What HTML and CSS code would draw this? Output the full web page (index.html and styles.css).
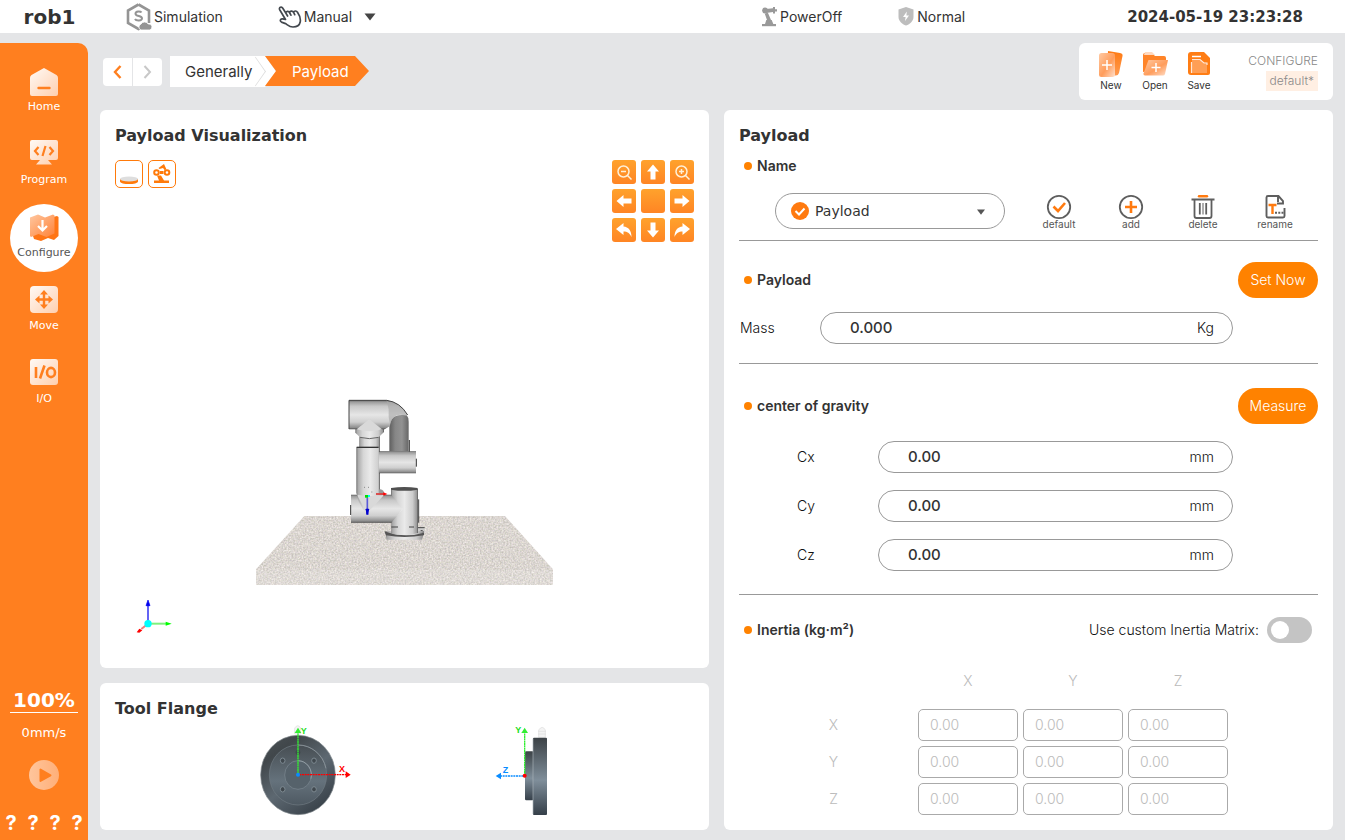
FILE: index.html
```html
<!DOCTYPE html>
<html lang="en">
<head>
<meta charset="utf-8">
<title>rob1 - Payload</title>
<link rel="stylesheet" href="styles.css">
</head>
<body>
<svg class="defs" width="0" height="0" aria-hidden="true">
  <defs>
    <linearGradient id="pale" x1="0" y1="0" x2="1" y2="1"><stop offset="0" stop-color="#fffaf6"/><stop offset="1" stop-color="#ffcfae"/></linearGradient>
    <linearGradient id="sheet" x1="0" y1="0" x2="1" y2="1"><stop offset="0" stop-color="#ffc9a2"/><stop offset="0.55" stop-color="#ff9d5c"/><stop offset="1" stop-color="#ffe0cc"/></linearGradient>
    <linearGradient id="deep" x1="0" y1="0" x2="0" y2="1"><stop offset="0" stop-color="#ff7a12"/><stop offset="1" stop-color="#ff9a50"/></linearGradient>
    <linearGradient id="mapFace" x1="0" y1="0" x2="1" y2="1"><stop offset="0" stop-color="#ffc7a0"/><stop offset="1" stop-color="#ff8238"/></linearGradient>
    <linearGradient id="playFace" x1="0" y1="0" x2="1" y2="0"><stop offset="0" stop-color="#ffc59c"/><stop offset="1" stop-color="#ffaf78"/></linearGradient>
    <linearGradient id="tubeH" x1="0" y1="0" x2="0" y2="1"><stop offset="0" stop-color="#555"/><stop offset="0.05" stop-color="#9a9a9a"/><stop offset="0.2" stop-color="#c8c8c8"/><stop offset="0.5" stop-color="#e6e6e6"/><stop offset="0.75" stop-color="#cfcfcf"/><stop offset="0.95" stop-color="#8a8a8a"/><stop offset="1" stop-color="#444"/></linearGradient>
    <linearGradient id="tubeV" x1="0" y1="0" x2="1" y2="0"><stop offset="0" stop-color="#6a6a6a"/><stop offset="0.06" stop-color="#aaa"/><stop offset="0.25" stop-color="#d6d6d6"/><stop offset="0.5" stop-color="#eaeaea"/><stop offset="0.8" stop-color="#cdcdcd"/><stop offset="0.95" stop-color="#999"/><stop offset="1" stop-color="#555"/></linearGradient>
    <linearGradient id="tubeDark" x1="0" y1="0" x2="1" y2="0"><stop offset="0" stop-color="#5f5f5f"/><stop offset="0.3" stop-color="#868686"/><stop offset="0.65" stop-color="#929292"/><stop offset="1" stop-color="#666"/></linearGradient>
    <linearGradient id="steel" x1="0" y1="0" x2="0" y2="1"><stop offset="0" stop-color="#3c4246"/><stop offset="0.55" stop-color="#7f8e9a"/><stop offset="1" stop-color="#353f49"/></linearGradient>
    <linearGradient id="disc" x1="0" y1="0" x2="0.7" y2="1"><stop offset="0" stop-color="#4c5357"/><stop offset="0.25" stop-color="#41474b"/><stop offset="0.6" stop-color="#5d6871"/><stop offset="1" stop-color="#39424a"/></linearGradient>
    <linearGradient id="discFace" x1="0" y1="0" x2="0" y2="1"><stop offset="0" stop-color="#474e53"/><stop offset="0.6" stop-color="#65727c"/><stop offset="1" stop-color="#4e5962"/></linearGradient>
    <filter id="grain" x="0" y="0" width="1" height="1" color-interpolation-filters="sRGB">
      <feTurbulence type="fractalNoise" baseFrequency="0.2" numOctaves="2" seed="4" result="n"/>
      <feColorMatrix in="n" type="matrix" values="0.28 0 0 0 0.72  0.26 0.06 0 0 0.68  0.26 0 0.08 0 0.65  0 0 0 0 1"/>
      <feComposite in2="SourceGraphic" operator="in"/>
    </filter>
  </defs>
</svg>

<div class="app">
  <header class="topbar">
    <strong class="robot-name">rob1</strong>
    <div class="status simulation">
      <svg width="26" height="28" viewBox="0 0 26 28"><path d="M12.500 1.500l10.500 6v12.500M16 24.500l-3.500 1.500-10.500-6v-12.500l10.500-6" fill="none" stroke="#949494" stroke-width="2.600"/><path d="M15.500 9.500c-1-1.500-6-1.600-6 1.200 0 3 6.500 1.600 6.500 4.600 0 3-6 2.800-7 .7" fill="none" stroke="#949494" stroke-width="2"/><path d="M15 27a3.200 3.200 0 0 1 0-6 4.200 4.200 0 0 1 7.200 0 3 3 0 0 1 1.300 6z" fill="#949494" stroke="#fff" stroke-width=".8"/></svg>
      <span>Simulation</span>
    </div>
    <button class="status manual" type="button">
      <svg width="24" height="22" viewBox="0 0 24 22"><path d="M7.500 13.500L1.700 3.700C.5 1.400 3.600.2 4.800 2.200l3 4.800c.2-2 3-2.300 3.700-.5.500-1.600 3-2 4-.3.700-1.700 3.200-1.500 4 .1 2.300 3.300 3.300 6.700 2.700 9.700-.7 3.500-3.600 5-7.200 5-3.600 0-5.500-2.200-7.500-3.400l-4-1.500c-2-1-1.200-3.600 1-3.200zM7.800 7l1.800 3M11.500 6.500l1.400 2.700M15.500 6.200l1.200 2.500" fill="none" stroke="#43484e" stroke-width="1.700" stroke-linejoin="round" stroke-linecap="round"/></svg>
      <span>Manual</span>
      <svg class="caret" width="12" height="8" viewBox="0 0 12 8"><path d="M.5.500h11L6 7.500z" fill="#444"/></svg>
    </button>
    <div class="status power">
      <svg width="16" height="20" viewBox="0 0 16 20"><g fill="#999"><rect x="1" y="17" width="14" height="2.200"/><path d="M4 17l1.300-4h5.400l1.600 4zM6 13L3.800 6.800l3-1.200L10 13z"/><circle cx="4" cy="3.500" r="2.900"/><path d="M5 2l7-.8V0h2v2.200h2v2.300h-2v2h-2V5L5 6z"/></g></svg>
      <span>PowerOff</span>
    </div>
    <div class="status normal">
      <svg width="16" height="19" viewBox="0 0 16 19"><path d="M8 0l7.500 2.600v7.400c0 4-3.500 7-7.500 8.600C4 17 .5 14 .5 10V2.600z" fill="#bdbdbd"/><path d="M8.800 4.500L5 10h2.600L7 14l4-5.500H8.400z" fill="#fff"/></svg>
      <span>Normal</span>
    </div>
    <time class="clock" datetime="2024-05-19T23:23:28">2024-05-19 23:23:28</time>
  </header>

  <div class="body">
    <nav class="sidebar" aria-label="Main">
      <ul class="menu">
        <li><a class="menu-item" href="#home"><svg width="30" height="30" viewBox="0 0 30 30"><path d="M15 2l12.500 7q1.500 1 1.500 3v16q0 2-2 2H3q-2 0-2-2V12q0-2 1.500-3z" fill="url(#pale)"/><path d="M9.500 22h11" stroke="#ff7f1f" stroke-width="2.400" stroke-linecap="round"/></svg><span>Home</span></a></li>
        <li><a class="menu-item" href="#program"><svg width="30" height="30" viewBox="0 0 30 30"><path d="M3 1h24q2 0 2 2v16q0 2-2 2h-8l4 4.500H7L11 21H3q-2 0-2-2V3q0-2 2-2z" fill="url(#pale)"/><path d="M9.500 8L6 12l3.500 4M20.500 8l3.500 4-3.500 4M16.500 7l-3 10" fill="none" stroke="#ff7f1f" stroke-width="2.200"/></svg><span>Program</span></a></li>
        <li><a class="menu-item active" href="#configure" aria-current="page"><svg width="30" height="30" viewBox="0 0 30 30"><path d="M10 6l8 1 6-2 4-1 1.500 1v19l-4.500 4-6-2-7 3-7-2-1-3z" fill="#ff7515"/><path d="M1 5.500l8-3 7 3 8-3 1.500 1v18l-8 3.500-8-3-7.500 3-1-1z" fill="url(#mapFace)"/><path d="M13.500 8v10M9 14l4.500 4.500L18 14" fill="none" stroke="#fff" stroke-width="2.200"/></svg><span>Configure</span></a></li>
        <li><a class="menu-item" href="#move"><svg width="30" height="30" viewBox="0 0 30 30"><rect x="1" y="1" width="28" height="27" rx="4" fill="url(#pale)"/><path d="M15 7v15M8 14.500h14" stroke="#ff7f1f" stroke-width="2.400"/><path d="M15 5l4 4.500h-8zM15 24l4-4.500h-8zM6 14.500l4.500-4v8zM24 14.500l-4.500-4v8z" fill="#ff7f1f"/></svg><span>Move</span></a></li>
        <li><a class="menu-item" href="#io"><svg width="30" height="30" viewBox="0 0 30 30"><rect x="1" y="1" width="28" height="26" rx="3" fill="url(#pale)"/><path d="M7 9v11M15.500 7.500l-4.500 13" stroke="#ff7f1f" stroke-width="2.600"/><ellipse cx="22" cy="14.500" rx="4" ry="4.600" fill="none" stroke="#ff7f1f" stroke-width="2.600"/></svg><span>I/O</span></a></li>
      </ul>
      <div class="speed">
        <strong class="percent">100%</strong>
        <span class="velocity">0mm/s</span>
        <button class="play" type="button" aria-label="Play"><svg width="30" height="30" viewBox="0 0 30 30"><circle cx="15" cy="15" r="15" fill="url(#playFace)"/><path d="M11.500 9.500v11.500l10-5.700z" fill="#ff7f1f" stroke="#ff7f1f" stroke-width="2" stroke-linejoin="round"/></svg></button>
        <div class="unknown"><span>?</span><span>?</span><span>?</span><span>?</span></div>
      </div>
    </nav>

    <main class="main">
      <div class="pagebar">
        <div class="history">
          <button type="button" aria-label="Back"><svg width="10" height="16" viewBox="0 0 10 16"><path d="M7.500 2L2 8l5.500 6" fill="none" stroke="#ff7f1f" stroke-width="2.400"/></svg></button>
          <button type="button" aria-label="Forward"><svg width="10" height="16" viewBox="0 0 10 16"><path d="M1.500 2L7 8l-5.500 6" fill="none" stroke="#c8c8c8" stroke-width="2"/></svg></button>
        </div>
        <nav class="crumbs" aria-label="Breadcrumb">
          <a class="crumb" href="#generally">Generally</a>
          <a class="crumb current" href="#payload" aria-current="page">Payload</a>
        </nav>
        <section class="files" aria-label="Configuration file">
          <button type="button"><svg width="26" height="28" viewBox="0 0 26 28"><path d="M10 1l12 2q3 .5 2.500 3L21 23q-1 3-4 2.500L9 24z" fill="url(#deep)"/><rect x="1" y="3" width="16" height="24" rx="2.500" fill="url(#sheet)"/><path d="M9 10v10M4 15h10" stroke="#fff" stroke-width="1.500"/></svg><span>New</span></button>
          <button type="button"><svg width="26" height="28" viewBox="0 0 26 28"><path d="M1 22V5q0-2 2-2h7l3 3h9q2 0 2 2v10z" fill="#ff8428"/><path d="M3 2h7l3 3H2z" fill="#ffd9bf"/><path d="M6.500 10H26l-3 14q-.5 1.500-2 1.500H3q-2 0-1.500-2z" fill="url(#sheet)"/><path d="M14 13v9M9.500 17.500h9" stroke="#fff" stroke-width="1.500"/></svg><span>Open</span></button>
          <button type="button"><svg width="26" height="28" viewBox="0 0 26 28"><path d="M5 2h13l6 6v15q0 2-2 2H5q-3 0-3-3V5q0-3 3-3z" fill="#ff7d14"/><path d="M6 23V10q0-1 1-1h7l4 3.500h2q1 0 1 1V23z" fill="#ff9f55"/><path d="M5.500 23V12M6 9.500h8l4 3.500h3v2" fill="none" stroke="#ffe6d4" stroke-width="1.200"/><path d="M6 6.500h9" stroke="#fff" stroke-width="1.500"/></svg><span>Save</span></button>
          <div class="file-info"><span>CONFIGURE</span><span class="file-name">default*</span></div>
        </section>
      </div>

      <div class="columns">
        <div class="left">
          <section class="card visual">
            <h2>Payload Visualization</h2>
            <div class="visual-tools">
              <div class="views">
                <button type="button" aria-label="Show base"><svg width="24" height="24" viewBox="0 0 24 24"><path d="M3 17v2.500c0 3.400 18 3.400 18 0V17z" fill="#ff7a0a"/><ellipse cx="12" cy="17" rx="9" ry="2.600" fill="#dedede"/></svg></button>
                <button type="button" aria-label="Show robot"><svg width="24" height="24" viewBox="0 0 24 24"><g fill="none" stroke="#ff7a0a" stroke-width="2"><circle cx="6.500" cy="10.500" r="2.300"/><circle cx="17" cy="10.500" r="2.300"/></g><path d="M4 18.500h5l-2-5h4l3 5h5V21H4zM10 9h3.500v3H10zM8.500 6L14 2l2.500 5.500-2 .5-1.500-2-3.500 1z" fill="#ff7a0a"/></svg></button>
              </div>
              <div class="pad">
                <button type="button" aria-label="Zoom out"><svg width="18" height="18" viewBox="0 0 18 18"><g fill="none" stroke="#fff0d8" stroke-width="1.500"><circle cx="8.500" cy="8.500" r="5.500"/><path d="M12.500 12.500l4 4M6 8.500h5"/></g></svg></button>
                <button type="button" aria-label="Up"><svg width="18" height="18" viewBox="0 0 18 18"><path d="M9 1.500l6 7h-3.500v8h-5v-8H3z" fill="#fff"/></svg></button>
                <button type="button" aria-label="Zoom in"><svg width="18" height="18" viewBox="0 0 18 18"><g fill="none" stroke="#fff0d8" stroke-width="1.500"><circle cx="8.500" cy="8.500" r="5.500"/><path d="M12.500 12.500l4 4M6 8.500h5M8.500 6v5"/></g></svg></button>
                <button type="button" aria-label="Left"><svg width="18" height="18" viewBox="0 0 18 18"><path d="M1.500 9l7-6v3.500h8v5h-8V15z" fill="#fff"/></svg></button>
                <button type="button" aria-label="Center"></button>
                <button type="button" aria-label="Right"><svg width="18" height="18" viewBox="0 0 18 18"><path d="M16.500 9l-7-6v3.500h-8v5h8V15z" fill="#fff"/></svg></button>
                <button type="button" aria-label="Rotate left"><svg width="18" height="18" viewBox="0 0 18 18"><path d="M1 8l7.500-6v3.500c5 .5 8 4 8 10.500-2-4-4-5.500-8-5.500V14z" fill="#fff"/></svg></button>
                <button type="button" aria-label="Down"><svg width="18" height="18" viewBox="0 0 18 18"><path d="M9 16.500l6-7h-3.500v-8h-5v8H3z" fill="#fff"/></svg></button>
                <button type="button" aria-label="Rotate right"><svg width="18" height="18" viewBox="0 0 18 18"><path d="M17 8L9.500 2v3.500c-5 .5-8 4-8 10.500 2-4 4-5.500 8-5.500V14z" fill="#fff"/></svg></button>
              </div>
            </div>
            <div class="stage">
              <svg class="scene" width="297" height="187" viewBox="48 27 891 561" role="img" aria-label="Robot arm on a table">
                <path d="M193 378H795L939 538V585H48V538z" fill="#ddd6d1" filter="url(#grain)"/>
                <path d="M48 539H939V585H48z" fill="#fff" opacity=".12"/>
                <path d="M534 412h20v18h-20z" fill="#ccc"/><path d="M534 413h20M542 422h6" stroke="#444" stroke-width="3"/>
                <path d="M448 184V96q0-30 30-30 28 0 28 30v88z" fill="url(#tubeDark)"/><path d="M508 150v36" stroke="#333" stroke-width="3"/>
                <path d="M358 130h62v170h-62z" fill="url(#tubeV)"/>
                <path d="M346 112h86v14l-16 16q-30 8-56 0l-14-14z" fill="url(#tubeV)"/><path d="M360 142q28 8 56 0" fill="none" stroke="#666" stroke-width="3"/>
                <path d="M327 31H440Q480 36 501 72V76Q452 68 450 108L434 118H420L388 90 352 118H327z" fill="url(#tubeH)"/>
                <path d="M440 33Q480 36 501 72V78Q458 64 450 104 444 80 446 58z" fill="#aaa" opacity=".65"/>
                <path d="M327 31H440Q480 36 503 75M327 31v86" fill="none" stroke="#444" stroke-width="3"/>
                <path d="M388 88l-38 30q38 12 76 0z" fill="#d9d9d9"/>
                <path d="M416 184H528V250H416z" fill="url(#tubeH)"/><path d="M529 206v24" stroke="#333" stroke-width="3"/>
                <path d="M412 300q20-8 22 16h-22z" fill="#999"/>
                <path d="M333 314H460L492 350 458 398H333z" fill="url(#tubeH)"/><path d="M332 345v30" stroke="#333" stroke-width="3"/>
                <path d="M436 424h116l-6 25H440z" fill="url(#tubeV)"/><path d="M433 424q60 22 119 4v8q-60 10-114 0z" fill="#555"/>
                <path d="M453 297h81v132q-40 10-80 2v-33l34-42-35-42z" fill="url(#tubeV)"/><path d="M453 294q40-6 80 0v5q-40 7-80 0z" fill="#505050"/><path d="M536 328v70M454 411h20M507 411h15" stroke="#444" stroke-width="3"/>
                <path d="M349 172h67v136l17 6-45 49q-10 4-18-4l-14-25-7-26z" fill="url(#tubeV)"/><path d="M353 318l23 42h14l43-46q-40 8-80 0z" fill="#d9d9d9"/><path d="M350 172h66" stroke="#333" stroke-width="4"/>
                <path d="M382 322v40" stroke="#5b5bd8" stroke-width="5"/><path d="M382 356v18" stroke="#00c" stroke-width="7"/><path d="M376 357h12l-6 18z" fill="#0000d0"/>
                <path d="M408 312h24" stroke="#d33" stroke-width="5"/><path d="M430 307l12 5-12 5z" fill="#f00"/><path d="M375 315h9v8h-9z" fill="#00e000"/><path d="M384 315h6v6h-6z" fill="#0ff"/><path d="M372 292h3M384 292h3M394 306h3" stroke="#888" stroke-width="3"/>
              </svg>
              <svg class="gizmo" width="36" height="36" viewBox="0 0 108 108" role="img" aria-label="Axes"><path d="M36 72V16" stroke="#6464f4" stroke-width="6"/><path d="M30 20l6-17 6 17z" fill="#00e" stroke="#00e" stroke-width="2"/><path d="M36 74h54" stroke="#7cf27c" stroke-width="6"/><path d="M89 68l18 6-18 6z" fill="#0f0"/><path d="M36 74L16 90" stroke="#f37b7b" stroke-width="6"/><path d="M2 100l8-11 9 5-9 7z" fill="#f00"/><circle cx="36" cy="74" r="11" fill="#0ff"/></svg>
            </div>
          </section>
          <section class="card flange">
            <h2>Tool Flange</h2>
            <div class="flange-views">
              <svg width="93" height="92" viewBox="60 12 279 276" role="img" aria-label="Flange front view">
                <path d="M164 42V24q10-14 18 0v18z" fill="#f4f4f4" stroke="#ddd" stroke-width="2"/>
                <ellipse cx="174" cy="165" rx="112" ry="119" fill="url(#disc)" stroke="#848b90" stroke-width="2"/>
                <ellipse cx="174" cy="165" rx="86" ry="90" fill="url(#discFace)" stroke="#6f7a82" stroke-width="2"/>
                <path d="M174 75a86 90 0 0 1 84 70" fill="none" stroke="#98a2a8" stroke-width="2"/>
                <ellipse cx="174" cy="165" rx="40" ry="43" fill="#56626b" stroke="#7d8a93" stroke-width="2"/><path d="M174 122a40 43 0 0 1 39 54" fill="none" stroke="#a3adb3" stroke-width="2"/>
                <g fill="#40484e" stroke="#7d8991" stroke-width="3"><ellipse cx="128" cy="122" rx="7" ry="8"/><ellipse cx="222" cy="122" rx="7" ry="8"/><ellipse cx="128" cy="208" rx="7" ry="8"/><ellipse cx="222" cy="208" rx="7" ry="8"/></g><ellipse cx="174" cy="97" rx="7" ry="8" fill="#40484e"/>
                <path d="M174 160V38" stroke="#3e3" stroke-width="4" stroke-dasharray="6 1"/><path d="M164 39l10-16 10 16z" fill="#3e3"/>
                <path d="M178 164h140" stroke="#f00" stroke-width="4" stroke-dasharray="6 2"/><path d="M317 154l15 10-15 10z" fill="#f00"/><circle cx="174" cy="164" r="6" fill="#0a8cff"/>
                <text x="182" y="41" class="axis-text" fill="#2d2">Y</text><text x="297" y="157" class="axis-text" fill="#f00">X</text>
              </svg>
              <svg width="54" height="92" viewBox="765 12 162 276" role="img" aria-label="Flange side view">
                <path d="M896 52V30q11-16 20 0v22zM894 34h24M894 42h24" fill="#f4f4f4" stroke="#ddd" stroke-width="2"/>
                <rect x="855" y="94" width="26" height="147" rx="4" fill="url(#steel)"/><rect x="879" y="53" width="42" height="232" rx="3" fill="url(#steel)"/><path d="M879 56v226" stroke="#abb3b9" stroke-width="2"/>
                <path d="M854 166V38" stroke="#3e3" stroke-width="4" stroke-dasharray="6 1"/><path d="M844 39l10-16 10 16z" fill="#3e3"/>
                <path d="M850 168h-70" stroke="#0a8cff" stroke-width="4" stroke-dasharray="6 2"/><path d="M783 158l-16 10 16 10z" fill="#0a8cff"/><circle cx="854" cy="167" r="6" fill="#f00"/>
                <text x="826" y="40" class="axis-text" fill="#2d2">Y</text><text x="788" y="160" class="axis-text" fill="#0a8cff">Z</text>
              </svg>
            </div>
          </section>
        </div>

        <section class="card settings">
          <h2>Payload</h2>
          <div class="group name-group">
            <h3>Name</h3>
            <div class="name-row">
              <div class="picker">
                <svg class="picker-check" width="18" height="18" viewBox="0 0 18 18"><circle cx="9" cy="9" r="9" fill="#ff7a0f"/><path d="M4.500 9l3.500 3.500 5.500-6" fill="none" stroke="#fff" stroke-width="2"/></svg>
                <select aria-label="Payload name"><option>Payload</option></select>
                <svg class="picker-caret" width="8" height="6" viewBox="0 0 8 6"><path d="M0 .5h8L4 5.800z" fill="#555"/></svg>
              </div>
              <div class="actions">
                <button type="button"><svg width="26" height="26" viewBox="0 0 26 26"><circle cx="13" cy="13" r="11.200" fill="none" stroke="#5e5e5e" stroke-width="1.800"/><path d="M7.500 12.500l4.500 4.500 7-8" fill="none" stroke="#ff7a0f" stroke-width="2.600"/></svg><span>default</span></button>
                <button type="button"><svg width="26" height="26" viewBox="0 0 26 26"><circle cx="13" cy="13" r="11.200" fill="none" stroke="#5e5e5e" stroke-width="1.800"/><path d="M13 7v12M7 13h12" fill="none" stroke="#ff7a0f" stroke-width="2.600"/></svg><span>add</span></button>
                <button type="button"><svg width="26" height="26" viewBox="0 0 26 26"><path d="M9 2.200h8" stroke="#ff7a0f" stroke-width="2.400" stroke-linecap="round"/><path d="M1.500 5.500h23M4.500 6v16q0 2 2 2h13q2 0 2-2V6M9.800 9v11.500M16.200 9v11.500" fill="none" stroke="#5e5e5e" stroke-width="1.800"/><path d="M13 9v11.500" stroke="#5e5e5e"/></svg><span>delete</span></button>
                <button type="button"><svg width="26" height="26" viewBox="0 0 26 26"><path d="M8 23.500H6q-1.500 0-1.500-1.500V3.500Q4.500 2 6 2h10.500l4.500 5v2.500H15M16 2v6M22.500 14v8q0 1.500-1.500 1.500H8" fill="none" stroke="#5e5e5e" stroke-width="1.900"/><path d="M6.500 11h8M10.500 11v9" stroke="#ff7a0f" stroke-width="2.400"/><path d="M13 18.800h2M16.300 18.800h2M19.500 18.800h2" stroke="#5e5e5e" stroke-width="2"/></svg><span>rename</span></button>
              </div>
            </div>
          </div>

          <div class="group mass-group">
            <div class="group-head"><h3>Payload</h3><button class="pill" type="button">Set Now</button></div>
            <div class="field mass"><label for="mass">Mass</label><div class="box"><input id="mass" type="text" value="0.000"><span>Kg</span></div></div>
          </div>

          <div class="group gravity-group">
            <div class="group-head"><h3>center of gravity</h3><button class="pill" type="button">Measure</button></div>
            <div class="field"><label for="cx">Cx</label><div class="box"><input id="cx" type="text" value="0.00"><span>mm</span></div></div>
            <div class="field"><label for="cy">Cy</label><div class="box"><input id="cy" type="text" value="0.00"><span>mm</span></div></div>
            <div class="field"><label for="cz">Cz</label><div class="box"><input id="cz" type="text" value="0.00"><span>mm</span></div></div>
          </div>

          <div class="inertia-head">
            <h3>Inertia (kg·m²)</h3>
            <label class="toggle"><span>Use custom Inertia Matrix:</span><input type="checkbox" role="switch"></label>
          </div>
          <table class="matrix">
            <thead><tr><td></td><th scope="col">X</th><th scope="col">Y</th><th scope="col">Z</th></tr></thead>
            <tbody>
              <tr><th scope="row">X</th><td><input disabled value="0.00" aria-label="Ixx"></td><td><input disabled value="0.00" aria-label="Ixy"></td><td><input disabled value="0.00" aria-label="Ixz"></td></tr>
              <tr><th scope="row">Y</th><td><input disabled value="0.00" aria-label="Iyx"></td><td><input disabled value="0.00" aria-label="Iyy"></td><td><input disabled value="0.00" aria-label="Iyz"></td></tr>
              <tr><th scope="row">Z</th><td><input disabled value="0.00" aria-label="Izx"></td><td><input disabled value="0.00" aria-label="Izy"></td><td><input disabled value="0.00" aria-label="Izz"></td></tr>
            </tbody>
          </table>
        </section>
      </div>
    </main>
  </div>
</div>
</body>
</html>
```
FILE: styles.css
```css
:root {
  --orange: #ff7f1f;
  --ink: #333;
  --line: #999;
  --ui: Inter, "Liberation Sans", sans-serif;
  --wide: "DejaVu Sans", sans-serif;
}
*, *::before, *::after { box-sizing: border-box; }
body { margin: 0; background: #e4e5e7; color: var(--ink); font: 300 14px/20px var(--ui); }
button, input, select { font: inherit; color: inherit; margin: 0; }
button { padding: 0; border: 0; background: none; cursor: pointer; }
a { color: inherit; text-decoration: none; }
h2, h3, ul { margin: 0; padding: 0; }
svg { display: block; flex: none; }
.defs { position: absolute; }
.app { display: flex; flex-direction: column; min-height: 100vh; }

/* top status bar */
.topbar { display: flex; align-items: center; height: 33px; padding-right: 42px; background: #fff; font-weight: 400; }
.robot-name { width: 99px; text-align: center; font: bold 20px/24px var(--wide); }
.status { display: flex; align-items: center; gap: 2px; }
.simulation { margin-left: 27px; }
.manual { margin-left: 55px; }
.caret { margin-left: 10px; }
.power { gap: 3px; margin-left: auto; }
.normal { gap: 3px; margin-left: 56px; }
.clock { margin-left: 162px; font: bold 15px/20px var(--wide); }

.body { display: flex; flex: 1; padding-top: 10px; }

/* sidebar */
.sidebar { display: flex; flex-direction: column; justify-content: space-between; width: 88px; flex: none; padding: 15px 0 7px; background: var(--orange); border-radius: 0 10px 0 0; color: #fff; font-family: var(--wide); font-weight: 400; }
.menu { display: grid; gap: 5px; justify-items: center; list-style: none; }
.menu-item { display: flex; flex-direction: column; align-items: center; gap: 3px; width: 68px; height: 68px; padding-top: 8px; border-radius: 50%; font-size: 11px; line-height: 16px; white-space: nowrap; }
.menu-item.active { background: #fff; color: #555; }
.speed { display: flex; flex-direction: column; align-items: center; }
.percent { width: 68px; border-bottom: 1px solid #fff; text-align: center; font-size: 20px; line-height: 24px; }
.velocity { margin-top: 10px; font-size: 13px; }
.play { margin-top: 17px; }
.unknown { display: flex; justify-content: space-around; width: 100%; margin-top: 23px; font: 700 20px/20px var(--ui); }

/* page bar */
.main { display: flex; flex-direction: column; flex: 1; gap: 10px; min-width: 0; padding: 0 12px 10px; }
.pagebar { display: flex; align-items: center; height: 57px; padding-left: 3px; }
.history { display: flex; gap: 1px; }
.history button { display: grid; place-items: center; width: 29px; height: 28px; background: #fff; border-radius: 4px 0 0 4px; }
.history button + button { border-radius: 0 4px 4px 0; }
.crumbs { display: flex; margin-left: 8px; font-size: 15px; font-weight: 400; }
.crumb { position: relative; width: 106px; height: 31px; padding-left: 15px; line-height: 31px; background: #fff; clip-path: polygon(0 0, 95px 0, 100% 50%, 95px 100%, 0 100%); }
.crumb:first-child::after { content: ""; position: absolute; right: 10px; top: 5px; width: 21px; height: 21px; border: solid #ddd; border-width: 1px 1px 0 0; transform: scaleX(0.7) rotate(45deg); }
.crumb.current { width: 104px; height: 30px; margin-left: -11px; padding-left: 27px; background: var(--orange); color: #fff; clip-path: polygon(0 0, 90px 0, 100% 50%, 90px 100%, 0 100%, 11px 50%); }
.files { display: flex; align-items: center; height: 57px; margin-left: auto; padding: 0 15px 2px 10px; background: #fff; border-radius: 6px; }
.files button { display: flex; flex-direction: column; align-items: center; width: 44px; font-size: 10px; line-height: 14px; font-weight: 400; }
.file-info { display: flex; flex-direction: column; align-items: flex-end; width: 97px; color: #888; font-size: 12px; }
.file-name { padding: 0 4px; background: #ffefe3; }

/* cards */
.columns { display: grid; grid-template-columns: 1fr 1fr; gap: 15px; flex: 1; }
.left { display: flex; flex-direction: column; gap: 15px; min-width: 0; }
.card { padding: 16px 15px 10px; background: #fff; border-radius: 6px; }
h2 { font: bold 16px/20px var(--wide); }
.visual { display: flex; flex-direction: column; flex: 1; }
.visual-tools { display: flex; justify-content: space-between; align-items: flex-start; margin-top: 14px; }
.views { display: flex; gap: 5px; }
.views button { display: grid; place-items: center; width: 28px; height: 28px; border: 1px solid #ff7a0a; border-radius: 5px; }
.pad { display: grid; grid-template-columns: repeat(3, 24px); grid-auto-rows: 24px; gap: 5px; }
.pad button { display: grid; place-items: center; border-radius: 3px; background: linear-gradient(#ffa22c, #ff8524); }
.stage { display: flex; flex: 1; flex-direction: column; justify-content: flex-end; padding-bottom: 23px; }
.scene { align-self: center; }
.gizmo { margin: 13px 0 0 21px; }
.flange-views { display: flex; justify-content: center; gap: 142px; margin-top: 5px; padding-bottom: 4px; }
.axis-text { font: bold 27px "Liberation Sans", sans-serif; }

/* payload settings */
h3 { display: flex; align-items: center; gap: 5px; padding-left: 5px; font-size: 14px; line-height: 20px; font-weight: 600; }
h3::before { content: ""; width: 8px; height: 8px; border-radius: 50%; background: #ff8200; }
.group { border-bottom: 1px solid var(--line); }
.group-head { display: flex; align-items: center; justify-content: space-between; }
.name-group { margin-top: 10px; padding-bottom: 10px; }
.name-row { display: flex; align-items: center; justify-content: space-between; height: 38px; margin-top: 16px; padding: 0 7px 0 36px; }
.picker { position: relative; width: 230px; }
.picker select { width: 100%; height: 36px; padding: 0 39px; appearance: none; border: 1px solid var(--line); border-radius: 18px; background: #fff; font: 14px/20px var(--wide); }
.picker-check { position: absolute; left: 16px; top: 9px; }
.picker-caret { position: absolute; right: 20px; top: 16px; }
.actions { display: flex; }
.actions button { display: flex; flex-direction: column; align-items: center; width: 72px; font: 400 10px/8px var(--ui); color: #555; }
.pill { width: 80px; height: 36px; border-radius: 18px; background: #ff8200; color: #fff; }
.mass-group { padding: 21px 0 19px; }
.gravity-group { padding: 24px 0 23px; }
.field { display: grid; grid-template-columns: 139px 1fr; align-items: center; margin-top: 17px; padding-right: 85px; color: #111; }
.field label { padding-left: 58px; }
.field.mass { grid-template-columns: 81px 1fr; margin-top: 14px; }
.field.mass label { padding-left: 1px; }
.box { display: flex; align-items: center; height: 32px; padding: 0 18px 0 29px; border: 1px solid var(--line); border-radius: 16px; }
.box input { flex: 1; min-width: 0; padding: 0; border: 0; background: none; outline: 0; color: var(--ink); font-size: 15px; font-weight: 500; }
.inertia-head { display: flex; justify-content: space-between; align-items: center; margin-top: 22px; padding-right: 6px; }
.toggle { display: flex; align-items: center; gap: 8px; color: #111; }
.toggle input { appearance: none; width: 45px; height: 26px; border-radius: 13px; background: #c4c4c4; }
.toggle input::before { content: ""; display: block; width: 18px; height: 18px; margin: 4px; border-radius: 50%; background: #fff; }
.toggle input:checked { background: var(--orange); }
.toggle input:checked::before { margin-left: 23px; }
.matrix { width: calc(100% - 85px); margin-top: 10px; table-layout: fixed; border-spacing: 5px; color: #bbb; }
.matrix th, .matrix td { padding: 0; font-weight: 300; }
.matrix thead td { width: 169px; }
.matrix thead th { height: 46px; }
.matrix tbody th { padding-left: 10px; }
.matrix input { display: block; width: 100%; height: 32px; padding: 0 11px 2px; border: 1px solid #aaa; border-radius: 5px; background: #fff; }
```
